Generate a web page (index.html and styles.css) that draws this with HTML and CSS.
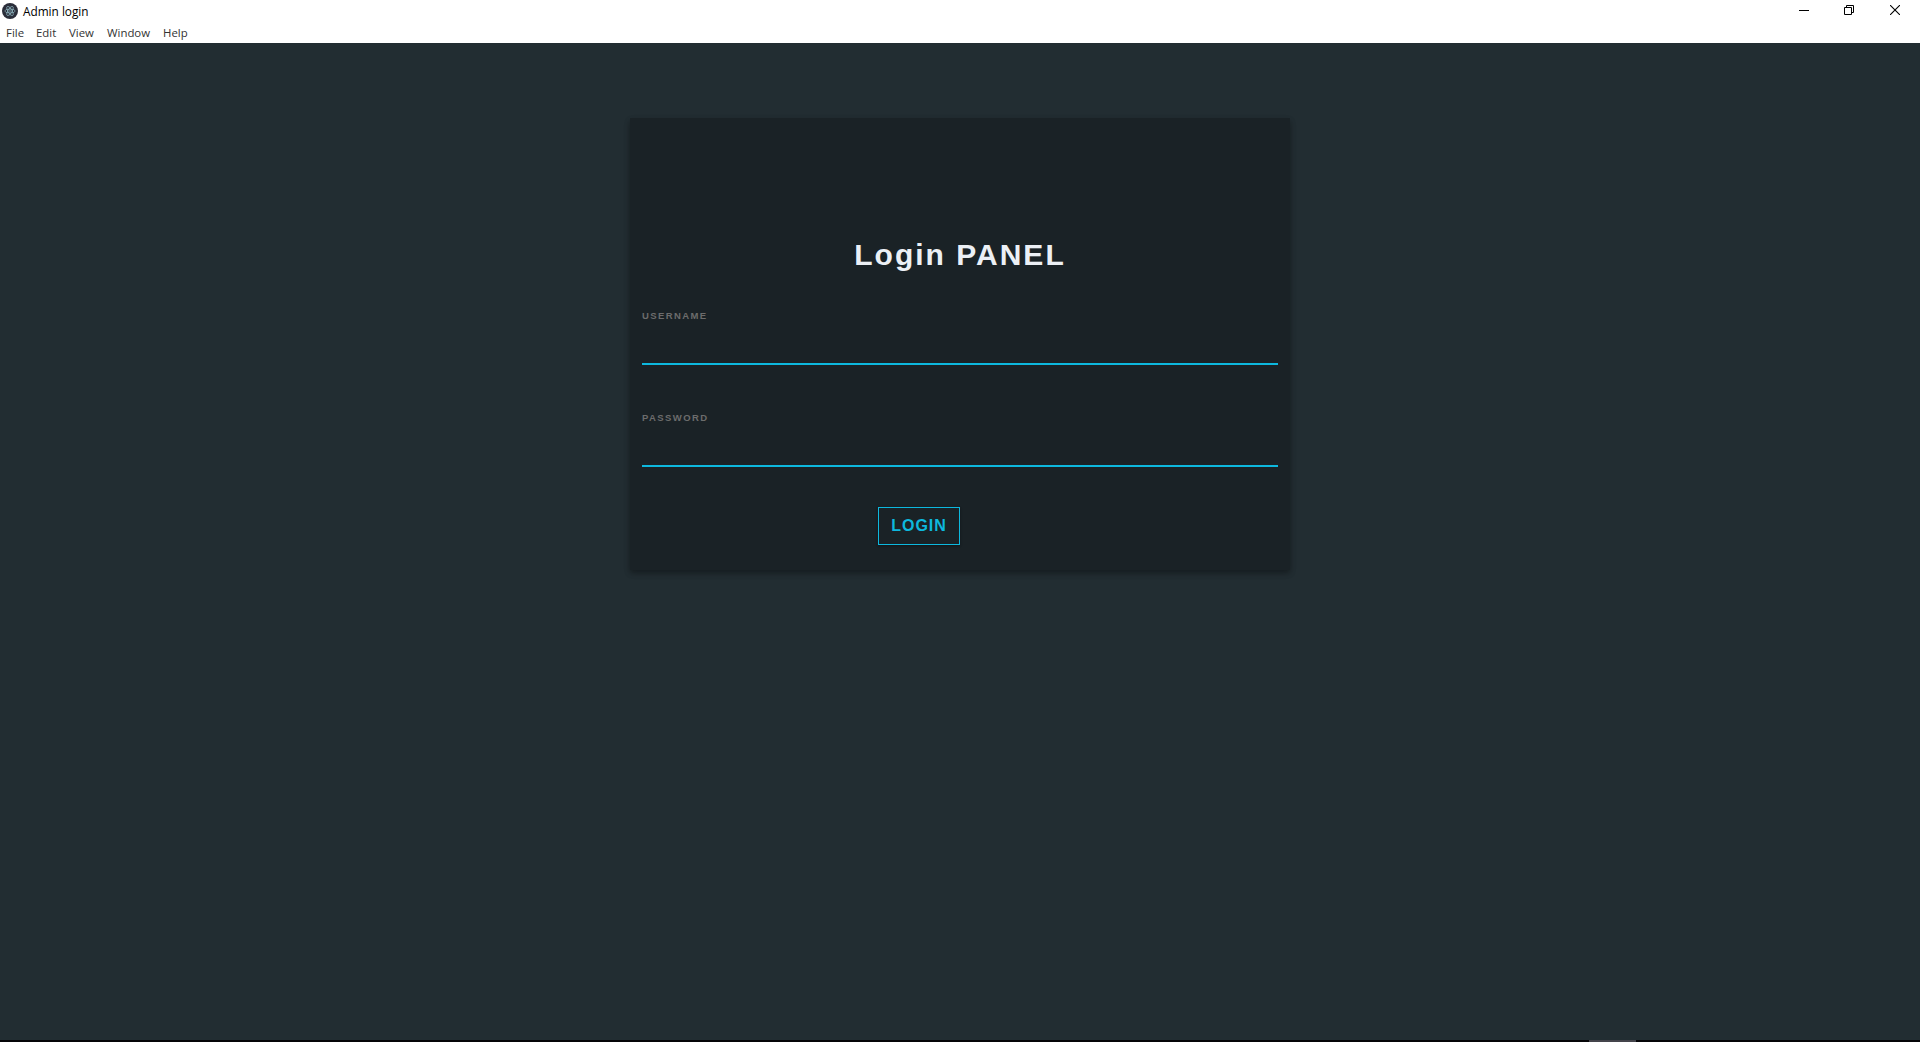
FILE: index.html
```html
<!DOCTYPE html>
<html lang="en">
<head>
<meta charset="utf-8">
<title>Admin login</title>
<link rel="stylesheet" href="styles.css">
</head>
<body>
<header class="titlebar">
  <div class="title-row">
    <svg class="app-icon" width="16" height="16" viewBox="0 0 16 16"><circle cx="8" cy="8" r="8" fill="#2b2e3a"/><g fill="none" stroke="#9fcbd5" stroke-width=".6"><ellipse cx="8" cy="8" rx="5.2" ry="2"/><ellipse cx="8" cy="8" rx="5.2" ry="2" transform="rotate(60 8 8)"/><ellipse cx="8" cy="8" rx="5.2" ry="2" transform="rotate(120 8 8)"/></g><circle cx="8" cy="8" r=".7" fill="#9fcbd5"/></svg>
    <span class="app-title">Admin login</span>
    <div class="controls">
      <svg width="10" height="10" viewBox="0 0 10 10"><path d="M0 5.5h10" stroke="#000"/></svg>
      <svg width="10" height="10" viewBox="0 0 10 10" fill="none" stroke="#000"><path d="M.5 2.5h7v7h-7zM2.5 2.5v-2h7v7h-2"/></svg>
      <svg width="10" height="10" viewBox="0 0 10 10"><path d="M0 0l10 10M10 0L0 10" stroke="#000" stroke-width="1.1"/></svg>
    </div>
  </div>
  <nav class="menu">
    <span class="file">File</span><span class="edit">Edit</span><span class="view">View</span><span class="window">Window</span><span>Help</span>
  </nav>
</header>
<main class="page">
  <form class="login-box">
    <h1 class="login-title">Login PANEL</h1>
    <div class="field">
      <label class="label" for="user">USERNAME</label>
      <input class="input" id="user" type="text">
    </div>
    <div class="field">
      <label class="label" for="pass">PASSWORD</label>
      <input class="input" id="pass" type="password">
    </div>
    <button class="login-button" type="button">LOGIN</button>
  </form>
</main>
<footer class="taskbar"><div class="taskbar-item"></div></footer>
</body>
</html>
```
FILE: styles.css
```css
* { box-sizing: border-box; }
body {
  margin: 0;
  height: 1042px;
  display: flex;
  flex-direction: column;
  overflow: hidden;
  background: #222d32;
  font-family: "Liberation Sans", Arial, sans-serif;
}
.titlebar {
  height: 43px;
  background: #fff;
  font-family: "Open Sans", "Noto Sans", sans-serif;
  font-size: 11.8px;
}
.title-row {
  display: flex;
  height: 22px;
  padding: 3px 20px 0 2px;
}
.app-title {
  margin-left: 5px;
  line-height: 16px;
  color: #000;
}
.controls {
  display: flex;
  gap: 35px;
  margin-left: auto;
  padding-top: 2px;
}
.controls svg:last-child { margin-left: 1px; }
.menu {
  display: flex;
  padding-left: 6px;
  line-height: 21px;
  font-size: 11.4px;
  color: #333;
}
.file { width: 30px; }
.edit { width: 33px; }
.view { width: 38px; }
.window { width: 56px; }
.page {
  flex: 1;
  padding-top: 75px;
}
.login-box {
  display: flex;
  flex-direction: column;
  width: 660px;
  height: 452px;
  margin: 0 auto;
  padding: 119px 12px 0;
  background: #1a2226;
  box-shadow: 0 3px 6px rgba(0, 0, 0, .16), 0 3px 6px rgba(0, 0, 0, .23);
}
.login-title {
  margin: 0 0 36px;
  font-size: 30px;
  line-height: 36px;
  letter-spacing: 2px;
  text-align: center;
  color: #ecf0f5;
}
.field {
  display: flex;
  flex-direction: column;
  height: 56px;
  margin-bottom: 46px;
}
.label {
  font-size: 9.5px;
  line-height: 14px;
  font-weight: bold;
  letter-spacing: 1.4px;
  color: #6c6c6c;
}
.input {
  flex: 1;
  padding: 0;
  border: 0;
  border-bottom: 2px solid #0db8de;
  outline: 0;
  background: transparent;
  color: #ecf0f5;
}
.login-button {
  width: 82px;
  height: 38px;
  margin: -6px 0 0 236px;
  padding: 0;
  border: 1px solid #0db8de;
  background: transparent;
  box-shadow: 0 1px 3px rgba(0, 0, 0, .12), 0 1px 2px rgba(0, 0, 0, .24);
  font: bold 16px "Liberation Sans", Arial, sans-serif;
  letter-spacing: 1px;
  color: #0db8de;
}
.taskbar {
  height: 2px;
  background: #050508;
}
.taskbar-item {
  width: 47px;
  height: 2px;
  margin-left: 1589px;
  background: #44444b;
}
```
